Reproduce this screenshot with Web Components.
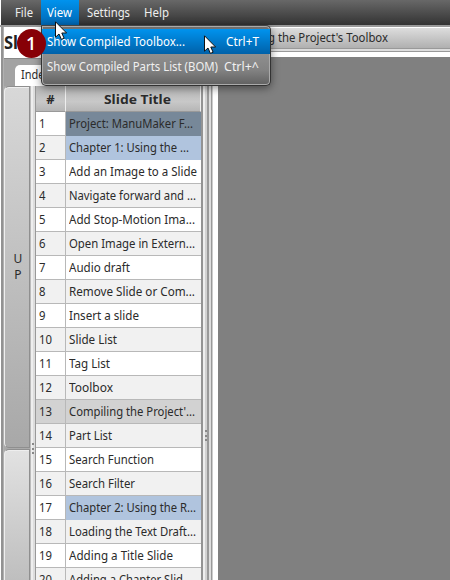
<!DOCTYPE html>
<html lang="en"><head><meta charset="utf-8"><title>Slides</title>
<style>body{margin:0;width:450px;height:580px;overflow:hidden;background:#fff;font:12px/16px "Noto Sans","Open Sans",sans-serif;color:#2b2b2b}</style></head>
<body><slide-app></slide-app>
<script>
const define=(name,html,ready)=>customElements.define(name,class extends HTMLElement{
  connectedCallback(){
    if(this.shadowRoot)return;
    const t=document.createElement('template');t.innerHTML=html;
    this.attachShadow({mode:'open'}).append(t.content.cloneNode(true));
    if(ready)ready(this,this.shadowRoot);
  }
});
define('fit-text',`<style>:host{display:inline-block;white-space:pre;height:16px}span{display:inline-block;transform-origin:0 50%}</style><span><slot></slot></span>`,(h,r)=>{
  const s=r.querySelector('span'),w=+h.getAttribute('w');
  h.style.width=w+'px';
  const n=s.getBoundingClientRect().width;
  if(n&&w)s.style.transform='scaleX('+w/n+')';
});
define('menu-item',`<style>:host{display:block;box-sizing:border-box;height:25px;padding:5px 6px 0;color:#eee}:host([open]){background:linear-gradient(#0093ee,#0068b5);color:#fff}</style><slot></slot>`);
define('menu-bar',`<style>:host{display:flex;height:25px;margin-left:1px;padding-left:8px;background:linear-gradient(#686868,#333);box-sizing:border-box}menu-item{flex:none}.f{width:32px}.v{width:38px;margin-right:2px}.s{width:57px}</style>
<menu-item class="f"><fit-text w="18">File</fit-text></menu-item><menu-item class="v" open><fit-text w="25">View</fit-text></menu-item><menu-item class="s"><fit-text w="43">Settings</fit-text></menu-item><menu-item><fit-text w="25">Help</fit-text></menu-item>`);
define('menu-row',`<style>:host{display:flex;justify-content:space-between;height:25px;box-sizing:border-box;padding:5px 11px 0 5px;color:#f0f0f0}:host([active]){background:linear-gradient(#0093ee,#0061a9);color:#fff}</style><slot></slot>`);
define('drop-menu',`<style>:host{position:absolute;left:41px;top:25px;width:230px;height:61px;box-sizing:border-box;border:1px solid #333;border-top-color:#444;border-radius:0 5px 5px 5px;background:linear-gradient(#6c6c6c 0,#929292 40%,#828282 75%,#606060);box-shadow:inset 0 0 0 1px #aaa,0 2px 9px #0007;padding:3px 0 0}</style>
<menu-row active><fit-text w="138">Show Compiled Toolbox...</fit-text><fit-text w="33">Ctrl+T</fit-text></menu-row><menu-row><fit-text w="171">Show Compiled Parts List (BOM)</fit-text><fit-text w="35">Ctrl+^</fit-text></menu-row>`);
define('mouse-arrow',`<style>:host{position:absolute;width:14px;height:20px}svg{display:block}</style><svg width="14" height="20" viewBox="0 0 14 20"><path d="M1.5 .8V16.2L5 13L7.4 18.4L10.1 17.2L7.8 12H12.6Z" fill="#fff" stroke="#111" stroke-width="1"/></svg>`);
define('step-badge',`<style>:host{position:absolute;left:16.5px;top:28.5px;width:29.5px;height:29.5px;border-radius:50%;background:#870006;color:#fff;font:600 18px/29px "Open Sans","Noto Sans",sans-serif;text-align:center}</style><slot></slot>`);
define('side-tabs',`<style>:host{display:flex;flex-direction:column;width:26px;flex:none;background:#aaa}div{flex:none;box-sizing:border-box;border:1px solid #8f8f8f;border-left:1px solid #eee;border-radius:5px 0 0 5px;box-shadow:inset 0 1px #eee}.a{height:362px;text-align:center;padding:164px 0 0 2px;background:linear-gradient(#d8d8d8,#a8a8a8)}.b{height:140px;background:linear-gradient(#e2e2e2,#bcbcbc);margin-top:1px}</style><div class="a">U<br>P</div><div class="b"></div>`);
define('split-grip',`<style>:host{display:flex;flex:none;flex-direction:column;gap:2.5px;align-items:flex-start;box-sizing:border-box}i{width:2px;height:2px;background:#888}</style><i></i><i></i><i></i>`);
define('slide-row',`<style>:host{display:flex;height:24px;background:#fff;flex:none}:host([alt]){background:#f1f1f1}:host([sel]){background:#d2d2d2}div{box-sizing:border-box;border-bottom:1px solid #b8b8b8;height:24px;padding:4px 3px 0}.n{width:30px;border-right:1px solid #b8b8b8}.t{flex:1;min-width:0}:host([kind=p]) .t{background:#778899;border-color:#778899}:host([kind=c]) .t{background:#b0c4de;border-color:#b0c4de}</style><div class="n"><slot name="n"></slot></div><div class="t"><slot></slot></div>`);
const rows=[["Project: ManuMaker F...",123],["Chapter 1: Using the ...",119],["Add an Image to a Slide",127],["Navigate forward and ...",126],["Add Stop-Motion Ima...",125],["Open Image in Extern...",125],["Audio draft",60],["Remove Slide or Com...",125],["Insert a slide",69],["Slide List",47],["Tag List",40],["Toolbox",43],["Compiling the Project'...",125],["Part List",42],["Search Function",84],["Search Filter",65],["Chapter 2: Using the R...",126],["Loading the Text Draft...",126],["Adding a Title Slide",103],["Adding a Chapter Slid...",122]];
define('slide-table',`<style>:host{display:flex;flex-direction:column;width:165px;flex:none;overflow:hidden}.h{display:flex;height:26px;flex:none;font-weight:bold;font-size:13px;background:linear-gradient(#b5b5b5,#c8c8c8 60%,#b4b4b4)}.h div{box-sizing:border-box;border-right:1px solid #eee;border-bottom:1px solid #999;text-align:center;padding-top:5px}.h div:first-child{width:30px}.h div:last-child{flex:1;padding-left:4px}</style><div class="h"><div>#</div><div><fit-text w="67">Slide Title</fit-text></div></div>`,(h,r)=>{
 rows.forEach(([t,w],i)=>{const e=document.createElement('slide-row');if(i%2)e.setAttribute('alt','');if(i==12)e.setAttribute('sel','');if(i==0)e.setAttribute('kind','p');if(i==1||i==16)e.setAttribute('kind','c');e.innerHTML='<fit-text slot="n" w="'+(i<9?6.5:13)+'">'+(i+1)+'</fit-text><fit-text w="'+(w+1)+'">'+t+'</fit-text>';r.append(e)});
});
define('slide-app',`<style>:host{display:block;position:relative;width:450px;height:580px;overflow:hidden;background:#fff}.main{display:flex;border-top:2px solid #999;height:553px}.edge{width:2px;flex:none;margin-left:1px;background:#929292;border-right:1px solid #b0b0b0}.left{width:197px;flex:none;display:flex;flex-direction:column}.name{height:31px;box-sizing:border-box;background:#fff;font:bold 18px/31px "Noto Sans",sans-serif;color:#222}.tabs{height:28px;box-sizing:border-box;border-top:1px solid #888;background:#a3a3a3;padding:6px 0 0 11px}.tab{height:21px;width:60px;background:#fff;border-radius:5px 0 0;box-sizing:border-box;padding:2px 6px}.body{display:flex;height:494px}.g1{width:6px;padding:357px 0 0 2px;background:linear-gradient(90deg,#bbb 0 1px,#eee 1px 3px,#ddd 3px 5px,#999 5px)}.g2{width:12px;padding:403px 0 0 4px;background:linear-gradient(90deg,#939393 0 2px,#eee 2px 4px,#d2d2d2 4px 6px,#999 6px 8px,#ddd 8px 10px,#999 10px 11px,#ccc 11px)}.right{flex:1;display:flex;flex-direction:column;background:#fff}.title{height:21px;box-sizing:border-box;border-top:1px solid #fff;background:linear-gradient(#ddd,#b0b0b0);padding:2px 0 0 55px}.line{height:4px;box-sizing:border-box;border:solid #999;border-width:1px 0;background:#ddd}.canvas{background:#808080;margin:5px 0 0 5px;flex:1}</style>
<menu-bar></menu-bar><div class="main"><div class="edge"></div><div class="left"><div class="name"><fit-text w="14">Sl</fit-text></div><div class="tabs"><div class="tab"><fit-text w="29">Index</fit-text></div></div><div class="body"><side-tabs></side-tabs><split-grip class="g1"></split-grip><slide-table></slide-table></div></div><split-grip class="g2"></split-grip><div class="right"><div class="title"><fit-text w="120">g the Project's Toolbox</fit-text></div><div class="line"></div><div class="canvas"></div></div></div>
<drop-menu></drop-menu><step-badge>1</step-badge><mouse-arrow style="left:54px;top:21px"></mouse-arrow><mouse-arrow style="left:203px;top:35px"></mouse-arrow>`);
</script></body></html>
